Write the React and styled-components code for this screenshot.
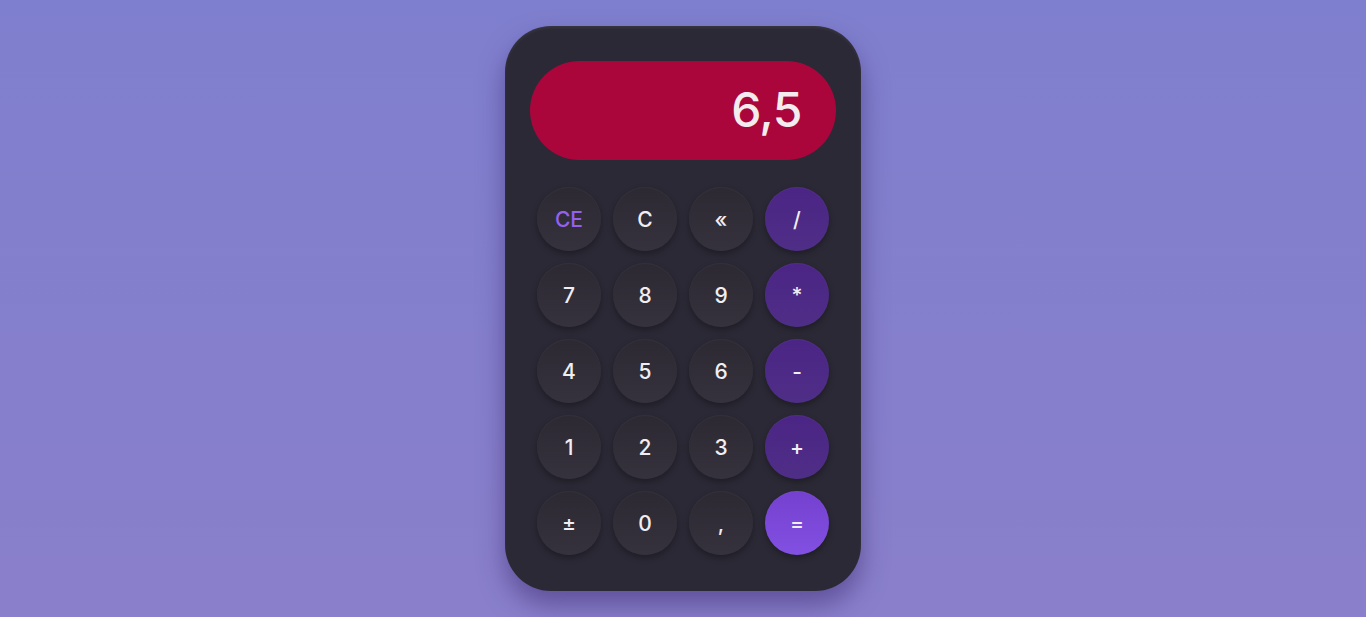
import React from "react";
import styled, { createGlobalStyle } from "styled-components";

const KEYS = [
  { label: "CE", kind: "accent" },
  { label: "C" },
  { label: "«" },
  { label: "/", kind: "op" },
  { label: "7" },
  { label: "8" },
  { label: "9" },
  { label: "*", kind: "op" },
  { label: "4" },
  { label: "5" },
  { label: "6" },
  { label: "-", kind: "op" },
  { label: "1" },
  { label: "2" },
  { label: "3" },
  { label: "+", kind: "op" },
  { label: "±" },
  { label: "0" },
  { label: "," },
  { label: "=", kind: "equals" },
];

function App() {
  return (
    <>
      <GlobalStyle />
      <Page>
        <Calculator>
          <Display>6,5</Display>
          <Keypad>
            {KEYS.map((key) => (
              <Key key={key.label} kind={key.kind}>
                {key.label}
              </Key>
            ))}
          </Keypad>
        </Calculator>
      </Page>
    </>
  );
}

const GlobalStyle = createGlobalStyle`
  * {
    box-sizing: border-box;
  }

  body {
    margin: 0;
    font-family: Inter, "Noto Sans", sans-serif;
  }
`;

const Page = styled.div`
  display: flex;
  justify-content: center;
  align-items: flex-start;
  height: 617px;
  padding-top: 26px;
  background: linear-gradient(180deg, #7f7fcf 0%, #8a7fcb 100%);
`;

const Calculator = styled.div`
  display: flex;
  flex-direction: column;
  align-items: center;
  width: 356px;
  height: 565px;
  padding: 35px 25px 36px;
  border-radius: 46px;
  background: #2b2935;
  box-shadow: 0 14px 26px rgba(55, 35, 105, 0.5),
    inset 0 2px 3px rgba(255, 255, 255, 0.06);
`;

const Display = styled.div`
  display: flex;
  justify-content: flex-end;
  align-items: center;
  width: 306px;
  height: 100px;
  padding-right: 34px;
  padding-bottom: 2px;
  border-radius: 50px;
  background: #aa063c;
  color: #f3ecef;
  font-size: 48px;
  font-weight: 500;
  letter-spacing: -0.5px;
`;

const keyBackground = {
  op: "linear-gradient(180deg, #4b2585 0%, #4f2e87 100%)",
  equals: "linear-gradient(180deg, #7440cf 0%, #8250e2 100%)",
};

const Key = styled.button`
  display: flex;
  justify-content: center;
  align-items: center;
  width: 64px;
  height: 64px;
  padding: 0;
  border: none;
  border-radius: 50%;
  background: ${({ kind }) =>
    keyBackground[kind] || "linear-gradient(180deg, #2c2933 0%, #35323d 100%)"};
  color: ${({ kind }) => (kind === "accent" ? "#9461ef" : "#f1eef3")};
  font-family: Inter, "Noto Sans", sans-serif;
  font-size: 21px;
  font-weight: 500;
  box-shadow: 0 3px 6px rgba(0, 0, 0, 0.3),
    inset 0 1px 1px rgba(255, 255, 255, 0.04);
  cursor: pointer;
`;

const Keypad = styled.div`
  display: grid;
  grid-template-columns: repeat(4, 64px);
  gap: 12px;
  margin-top: 27px;
`;

export default App;
